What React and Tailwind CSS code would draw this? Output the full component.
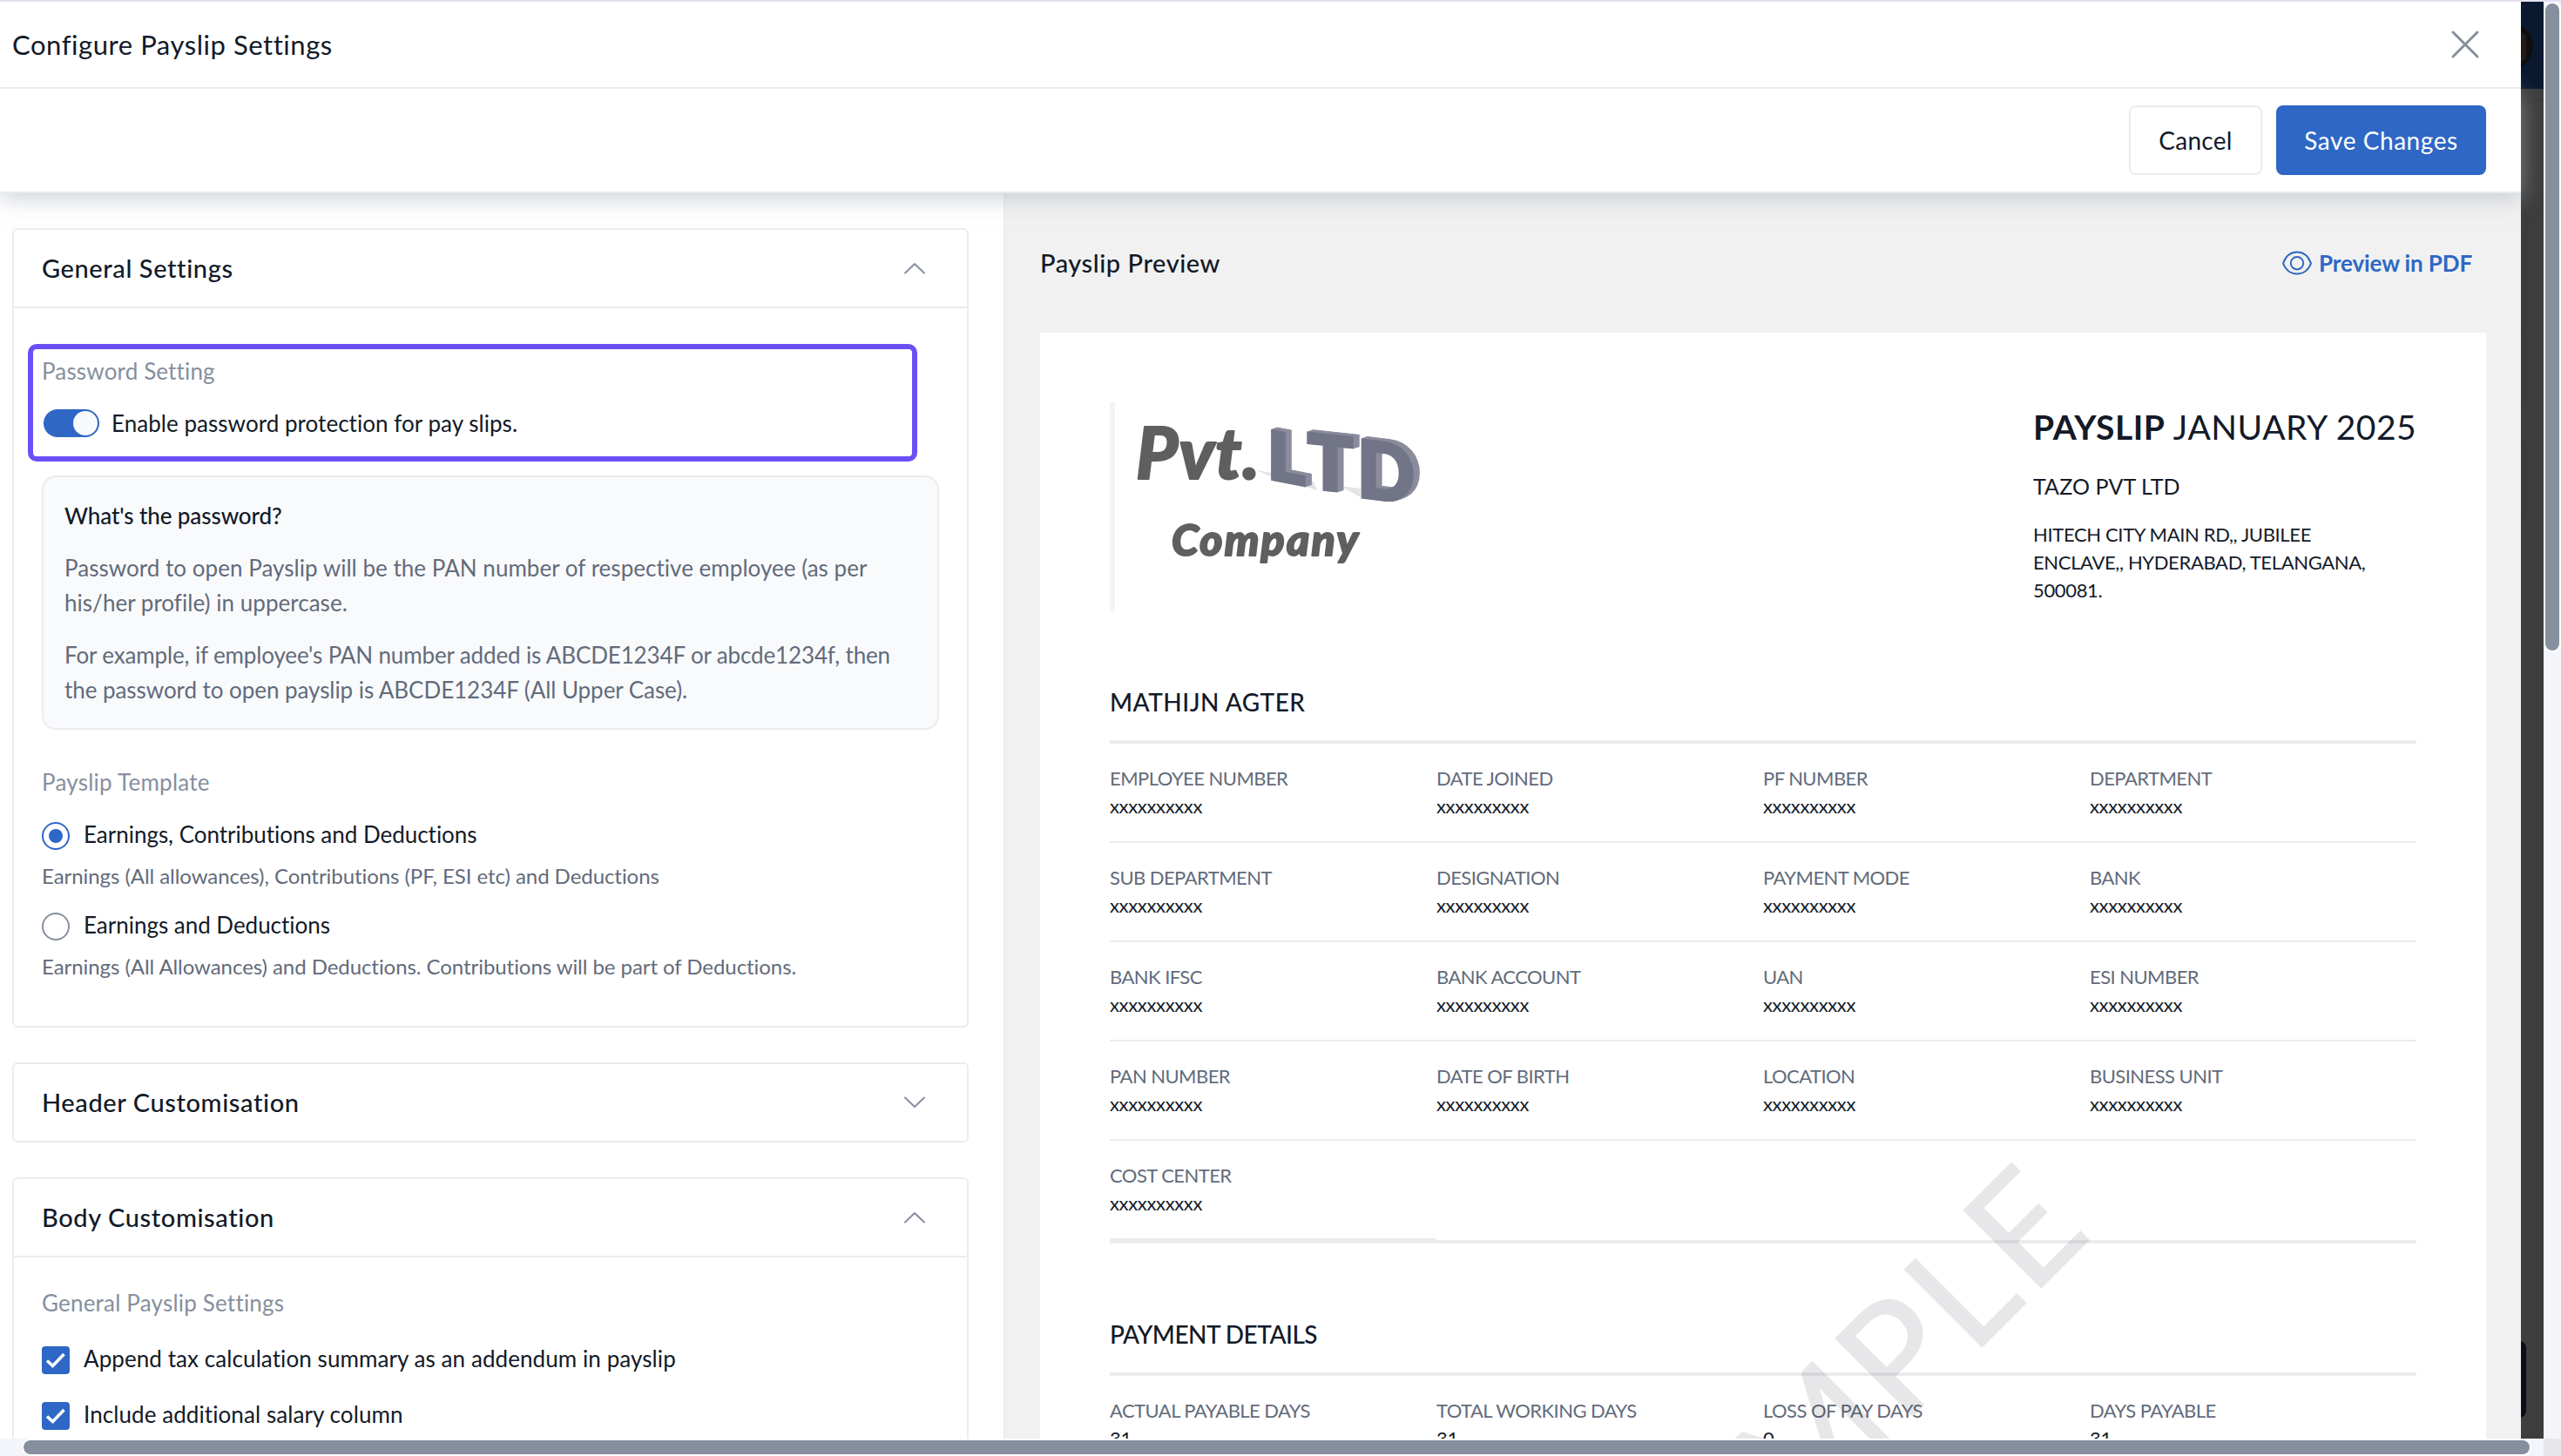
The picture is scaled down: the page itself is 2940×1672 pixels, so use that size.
import { useState } from 'react'
import clsx from 'clsx'

const employeeFields = [
  'Employee Number', 'Date Joined', 'PF Number', 'Department',
  'Sub Department', 'Designation', 'Payment Mode', 'Bank',
  'Bank IFSC', 'Bank Account', 'UAN', 'ESI Number',
  'PAN Number', 'Date Of Birth', 'Location', 'Business Unit',
  'Cost Center',
]

const paymentFields = [
  { label: 'Actual Payable Days', value: '31' },
  { label: 'Total Working Days', value: '31' },
  { label: 'Loss Of Pay Days', value: '0' },
  { label: 'Days Payable', value: '31' },
]

const templates = [
  {
    id: 'ecd',
    title: 'Earnings, Contributions and Deductions',
    hint: 'Earnings (All allowances), Contributions (PF, ESI etc) and Deductions',
  },
  {
    id: 'ed',
    title: 'Earnings and Deductions',
    hint: 'Earnings (All Allowances) and Deductions. Contributions will be part of Deductions.',
  },
]

function Chevron({ open }) {
  return (
    <svg className="w-6 h-3 overflow-visible" viewBox="0 0 24 12" fill="none" stroke="#868f9e" strokeWidth="2" strokeLinecap="round" strokeLinejoin="round">
      <path d={open ? 'M1 11.5L12 1l11 10.5' : 'M1 .5L12 11 23 .5'} />
    </svg>
  )
}

function Section({ title, open, onToggle, children }) {
  return (
    <section className="relative shrink-0 rounded-md border-2 border-[#ececee] bg-white">
      <button
        onClick={onToggle}
        className={clsx('flex w-full items-center justify-between pl-8 pr-12', open ? 'h-[90px] border-b-2 border-[#ececee]' : 'h-[88px]')}
      >
        <span className="pb-px text-[29px] font-medium tracking-[0.6px]">{title}</span>
        <Chevron open={open} />
      </button>
      {open && children}
    </section>
  )
}

function Checkbox({ label, className }) {
  return (
    <label className={clsx('flex h-10 items-center gap-4', className)}>
      <span className="flex h-8 w-8 items-center justify-center rounded bg-[#2e67c5]">
        <svg className="h-8 w-8" viewBox="0 0 32 32" fill="none" stroke="#fff" strokeWidth="3.6">
          <path d="M6 16.5l6.5 6L25.5 9" />
        </svg>
      </span>
      <span className="pb-1 text-[26px] tracking-[0.08px]">{label}</span>
    </label>
  )
}

function Field({ label, value }) {
  return (
    <div className="h-[114px] border-b-2 border-[#ebecee] pt-6 text-[22px] leading-8">
      <div className="uppercase tracking-[-0.55px] text-[#626b7b]">{label}</div>
      <div className="tracking-[-0.35px]">{value}</div>
    </div>
  )
}

function CompanyLogo() {
  return (
    <svg className="h-60 w-[400px] overflow-visible" viewBox="0 0 400 240">
      <g fill="#5f5f61" stroke="#5f5f61" strokeWidth="2" strokeLinejoin="round" fontFamily="Lato, sans-serif" fontWeight="900" fontStyle="italic">
        <text x="24" y="88" fontSize="82" textLength="142">Pvt.</text>
        <text x="65" y="176" fontSize="50" textLength="214">Company</text>
      </g>
      <path d="M162 78l24 10v-6zM216 91l12 0 4 10-16-5zM258 96l24 3v10z" fill="#e4e4e6" />
      <g fontFamily="Lato, sans-serif" fontWeight="900" strokeWidth="4">
        {[7, 6, 5, 4, 3, 2, 1, 0].map((d) => (
          <g key={d} fill={d ? '#8b8c9c' : '#727587'} stroke={d ? '#8b8c9c' : '#727587'} transform={`translate(${d} ${-d / 3})`}>
            <text transform="translate(175 87) skewY(11)" fontSize="76" textLength="43" lengthAdjust="spacingAndGlyphs">L</text>
            <text transform="translate(221 98) skewY(6)" fontSize="86" textLength="52" lengthAdjust="spacingAndGlyphs">T</text>
            <text transform="translate(278 108) skewY(7)" fontSize="90" textLength="66" lengthAdjust="spacingAndGlyphs">D</text>
          </g>
        ))}
      </g>
    </svg>
  )
}

function PayslipPreview() {
  return (
    <div className="relative h-[1600px] bg-white px-20 pt-20">
      <div className="flex h-60 justify-between">
        <div className="border-l-[6px] border-[#f2f4f7]">
          <CompanyLogo />
        </div>
        <div className="w-[440px] pt-1">
          <h1 className="text-[39px] leading-[48px] tracking-[0.5px] whitespace-nowrap">
            <b className="font-bold">PAYSLIP</b> JANUARY 2025
          </h1>
          <p className="mt-6 text-[25px] leading-10 tracking-[0.1px]">TAZO PVT LTD</p>
          <p className="mt-5 text-[22px] leading-8 tracking-[-0.35px]">
            HITECH CITY MAIN RD,, JUBILEE<br />
            ENCLAVE,, HYDERABAD, TELANGANA,<br />
            500081.
          </p>
        </div>
      </div>

      <h2 className="mt-[84px] text-[28px] font-medium leading-10 tracking-[0.5px]">MATHIJN AGTER</h2>
      <div className="mt-6 grid grid-cols-4 border-y-4 border-[#ebecee]">
        {employeeFields.map((f) => (
          <Field key={f} label={f} value="xxxxxxxxxx" />
        ))}
      </div>

      <h2 className="mt-[84px] text-[28px] font-medium leading-10 tracking-[-0.5px]">PAYMENT DETAILS</h2>
      <div className="mt-6 grid grid-cols-4 border-y-4 border-[#ebecee]">
        {paymentFields.map((f) => (
          <Field key={f.label} label={f.label} value={f.value} />
        ))}
      </div>

      {/* watermark */}
      <svg className="pointer-events-none absolute inset-0 h-full w-full" viewBox="0 0 1660 1600">
        <text
          transform="translate(1214 1033) rotate(-45)"
          textAnchor="end"
          fontFamily="Lato, sans-serif"
          fontSize="177"
          fontWeight="500"
          letterSpacing="5"
          fill="#111827"
          fillOpacity="0.1"
        >
          SAMPLE
        </text>
      </svg>
    </div>
  )
}

export default function App() {
  const [sections, setSections] = useState({ general: true, header: false, body: true })
  const [template, setTemplate] = useState('ecd')
  const [passwordOn, setPasswordOn] = useState(true)

  const toggle = (key) => setSections((s) => ({ ...s, [key]: !s[key] }))

  return (
    <div className="flex h-[1672px] w-[2940px] flex-col overflow-hidden border-t-2 border-[#e4e1ee] bg-white font-['Lato',sans-serif] text-[#131a28]">
      <div className="flex min-h-0 flex-1">
        <div className="flex w-[2894px] flex-col">
          <header className="relative z-20 flex h-[100px] shrink-0 items-center justify-between border-b-2 border-[#ececee] bg-white pl-3.5 pr-[49px]">
            <h1 className="pt-px text-[31px] tracking-[0.55px]">Configure Payslip Settings</h1>
            <svg className="h-[30px] w-[30px] overflow-visible" viewBox="0 0 30 30" stroke="#868f9e" strokeWidth="3" strokeLinecap="round">
              <path d="M1 1l28 28M29 1L1 29" />
            </svg>
          </header>

          <div className="relative z-10 flex h-[120px] shrink-0 items-center justify-end gap-4 border-b-2 border-[#e9eaee] bg-white pr-10 text-[28px] shadow-[0_6px_24px_rgba(172,178,190,0.6)]">
            <button className="h-20 w-[153px] rounded-lg border-2 border-[#ececee] tracking-[0.3px]">Cancel</button>
            <button className="h-20 w-[241px] rounded-lg bg-[#2e67c5] tracking-[0.55px] text-white">Save Changes</button>
          </div>

          <div className="flex min-h-0 flex-1">
            {/* settings column */}
            <div className="flex w-[1152px] shrink-0 flex-col gap-10 overflow-hidden pl-3.5 pr-10 pt-10">
              <Section title="General Settings" open={sections.general} onToggle={() => toggle('general')}>
                <div className="px-8 pb-[52px] pt-[52px] text-[26px] leading-10">
                  <div className="tracking-[0.15px] text-[#868f9e]">Password Setting</div>
                  <div className="mt-5 flex h-10 items-center gap-[14px] pl-0.5">
                    <button
                      onClick={() => setPasswordOn(!passwordOn)}
                      className={clsx('flex h-8 w-16 items-center rounded-full p-0.5', passwordOn ? 'justify-end bg-[#2e67c5]' : 'bg-gray-300')}
                    >
                      <span className="h-7 w-7 rounded-full bg-[#f8f9fc]" />
                    </button>
                    <span className="tracking-[0.04px]">Enable password protection for pay slips.</span>
                  </div>

                  <div className="mt-10 rounded-2xl border-2 border-[#ececee] bg-[#f9fafc] p-6">
                    <p className="font-medium tracking-[-0.1px]">What's the password?</p>
                    <p className="mt-5 tracking-[0.03px] text-[#626b7b]">
                      Password to open Payslip will be the PAN number of respective employee (as per<br />
                      his/her profile) in uppercase.
                    </p>
                    <p className="mt-5 tracking-[-0.14px] text-[#626b7b]">
                      For example, if employee's PAN number added is ABCDE1234F or abcde1234f, then<br />
                      <span className="tracking-[-0.06px]">the password to open payslip is ABCDE1234F (All Upper Case).</span>
                    </p>
                  </div>

                  <div className="mt-10 tracking-[0.25px] text-[#868f9e]">Payslip Template</div>
                  {templates.map((t) => (
                    <div key={t.id}>
                      <label className="mt-[22px] flex h-10 items-center gap-4" onClick={() => setTemplate(t.id)}>
                        <span className={clsx('flex h-8 w-8 items-center justify-center rounded-full border-2', template === t.id ? 'border-[#2e67c5]' : 'border-[#868f9e]')}>
                          {template === t.id && <span className="h-4 w-4 rounded-full bg-[#2e67c5]" />}
                        </span>
                        <span className="pb-1 tracking-[-0.02px]">{t.title}</span>
                      </label>
                      <p className="mt-2.5 text-2xl leading-8 tracking-[-0.06px] text-[#626b7b]">{t.hint}</p>
                    </div>
                  ))}
                </div>
                <div className="pointer-events-none absolute left-4 top-[131px] h-[135px] w-[1021px] rounded-[10px] border-6 border-[#6b4ff6]" />
              </Section>

              <Section title="Header Customisation" open={sections.header} onToggle={() => toggle('header')} />

              <Section title="Body Customisation" open={sections.body} onToggle={() => toggle('body')}>
                <div className="px-8 pb-12 pt-8">
                  <div className="text-[26px] leading-10 tracking-[0.2px] text-[#868f9e]">General Payslip Settings</div>
                  <Checkbox className="mt-[26px]" label="Append tax calculation summary as an addendum in payslip" />
                  <Checkbox className="mt-6" label="Include additional salary column" />
                </div>
              </Section>
            </div>

            {/* preview column */}
            <div className="flex-1 overflow-hidden border-l-2 border-[#ececec] bg-[#f1f1f1] px-10">
              <div className="flex h-40 items-center justify-between pr-4">
                <h2 className="text-[29px] font-medium tracking-[0.55px]">Payslip Preview</h2>
                <a className="flex items-center gap-2 text-[26px] font-bold tracking-[-0.12px] text-[#2e67c5]">
                  <svg className="h-7 w-[34px]" viewBox="0 0 34 28" fill="none" stroke="currentColor" strokeWidth="2">
                    <path d="M1 14.5C4 6 10 1.5 17 1.5S30 6 33 14.5C30 22 24 26.5 17 26.5S4 22 1 14.5z" strokeLinejoin="round" />
                    <circle cx="17" cy="14.2" r="7.2" />
                  </svg>
                  Preview in PDF
                </a>
              </div>
              <PayslipPreview />
            </div>
          </div>
        </div>

        {/* dimmed page behind the drawer */}
        <div className="relative w-[26px] overflow-hidden bg-[#3d3d3d]">
          <div className="relative h-[100px] overflow-hidden bg-[#0b1930]">
            <div className="absolute -left-[42px] top-[23px] h-14 w-14 rounded-full bg-[#0d0e10]" />
            <div className="absolute -left-1 top-9 h-8 w-2.5 rounded-full bg-[#231a16]" />
          </div>
          <div className="h-3.5 border-b border-[#363636]" />
          <div className="absolute -left-2 top-[234px] h-[144px] w-3.5 rounded-r-lg border border-[#383838]" />
          <div className="absolute -left-2 top-[381px] h-20 w-3.5 rounded-r-lg border border-[#383838]" />
          <div className="absolute -left-2 top-[503px] h-[90px] w-3.5 rounded-r-lg border border-[#383838]" />
          <div className="absolute -left-2.5 top-[1538px] h-[88px] w-4 rounded-r-lg bg-[#0b0e15]" />
        </div>

        <div className="w-5 bg-[#f4f5fa] px-0.5 pt-0.5">
          <div className="h-[743px] rounded-full bg-[#868f9e] ring-2 ring-white" />
        </div>
      </div>

      <div className="flex h-5 shrink-0 items-center bg-[#f4f5fa]">
        <div className="ml-[27px] h-4 w-[2877px] rounded-full bg-[#868f9e] ring-2 ring-white" />
        <div className="ml-auto h-5 w-5 bg-[#e7e7ea]" />
      </div>
    </div>
  )
}
